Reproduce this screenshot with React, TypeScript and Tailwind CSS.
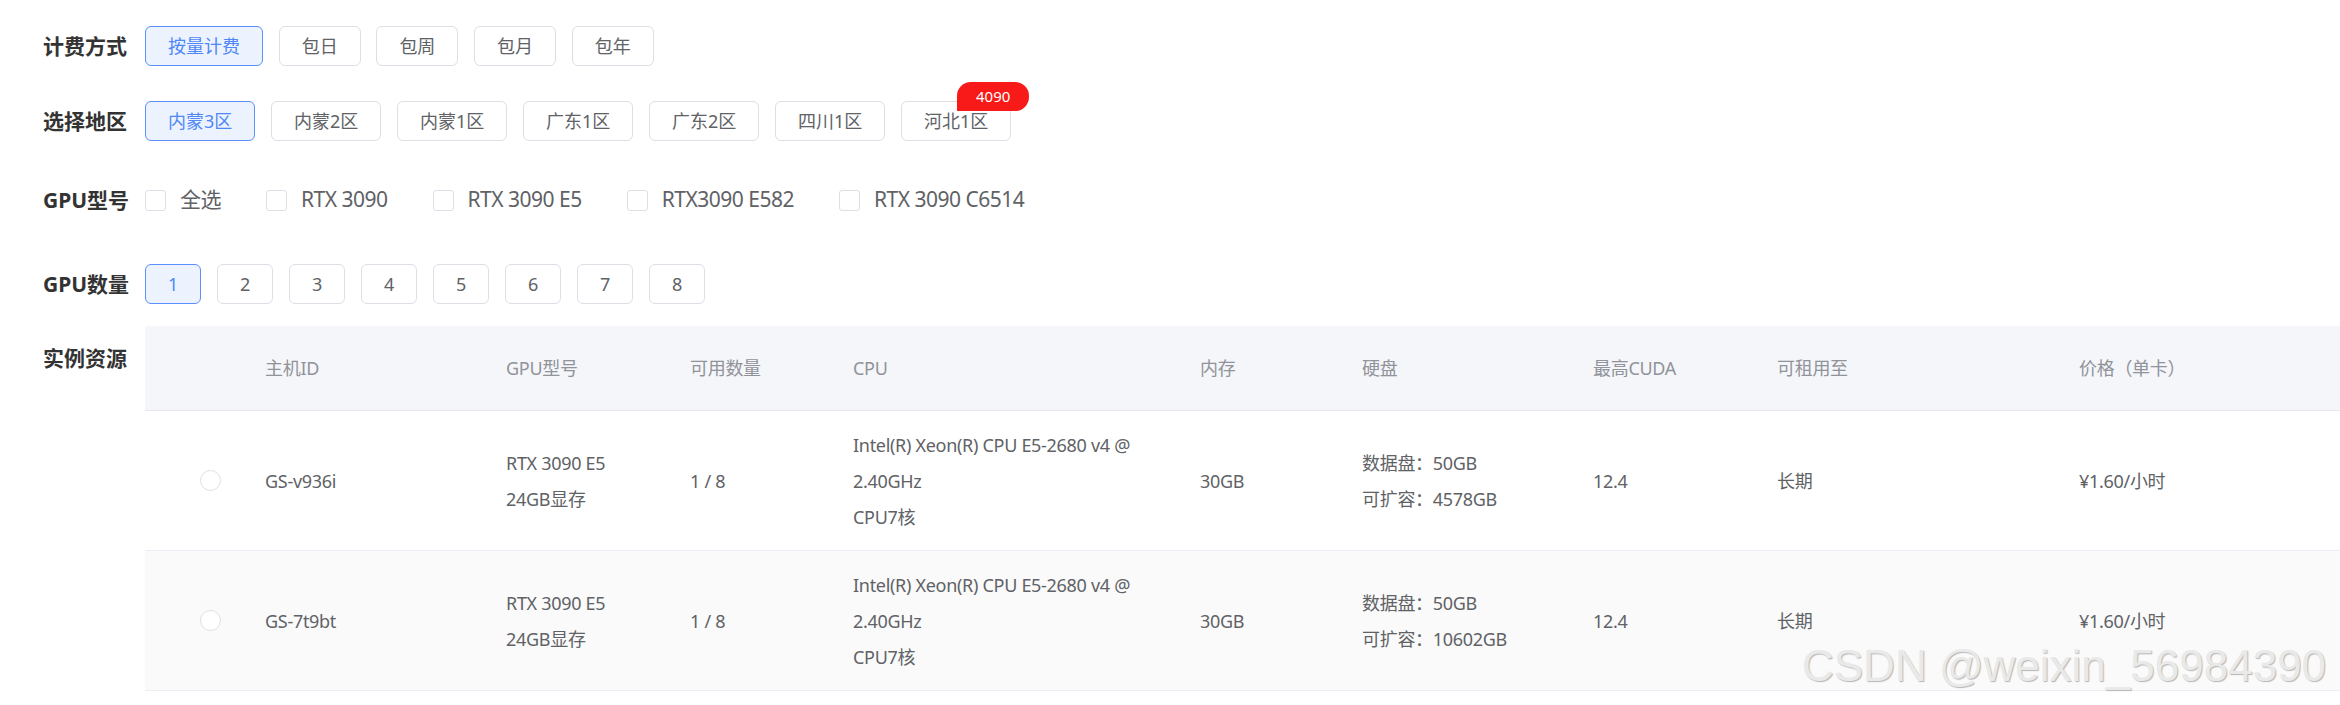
import React from "react";

const billing = ["按量计费", "包日", "包周", "包月", "包年"];
const regions = ["内蒙3区", "内蒙2区", "内蒙1区", "广东1区", "广东2区", "四川1区", "河北1区"];
const gpus = ["全选", "RTX 3090", "RTX 3090 E5", "RTX3090 E582", "RTX 3090 C6514"];
const counts = ["1", "2", "3", "4", "5", "6", "7", "8"];

const GRID =
  "grid grid-cols-[120px_241px_184px_163px_347px_162px_231px_184px_302px_1fr] items-center";

function Btn({ label, active }: { label: string; active?: boolean }) {
  return (
    <div
      className={
        active
          ? "h-[40px] px-[22px] flex items-center justify-center rounded-[6px] border border-[#5b8ff9] bg-[#ecf3ff] text-[#4f87f7] text-[18px]"
          : "h-[40px] px-[22px] flex items-center justify-center rounded-[6px] border border-[#dcdfe6] bg-white text-[#606266] text-[18px]"
      }
    >
      {label}
    </div>
  );
}

function Label({ children }: { children: React.ReactNode }) {
  return (
    <div className="w-[102px] shrink-0 text-[21px] font-bold text-[#333333] leading-[30px]">
      {children}
    </div>
  );
}

const rows = [
  { id: "GS-v936i", disk: "4578GB", bg: "bg-white" },
  { id: "GS-7t9bt", disk: "10602GB", bg: "bg-[#fafafa]" },
];

export default function App() {
  return (
    <div className="relative w-[2340px] h-[705px] overflow-hidden bg-white pl-[43px] font-['Noto_Sans','Noto_Sans_CJK_SC',sans-serif]">
      <div className="flex items-center mt-[26px] h-[40px]">
        <Label>计费方式</Label>
        <div className="flex gap-[15.7px]">
          {billing.map((b, i) => (
            <Btn key={b} label={b} active={i === 0} />
          ))}
        </div>
      </div>

      <div className="flex items-center mt-[35px] h-[40px]">
        <Label>选择地区</Label>
        <div className="flex gap-[15.7px]">
          {regions.map((r, i) => (
            <div key={r} className="relative">
              <Btn label={r} active={i === 0} />
              {i === regions.length - 1 && (
                <div className="absolute top-[-19px] right-[-18px] w-[72px] h-[29px] flex items-center justify-center bg-[#f81a18] text-white text-[15px] rounded-[14px] rounded-bl-none">
                  4090
                </div>
              )}
            </div>
          ))}
        </div>
      </div>

      <div className="flex items-center mt-[39px] h-[40px]">
        <Label>GPU型号</Label>
        <div className="flex items-center">
          {gpus.map((g) => (
            <div key={g} className="flex items-center mr-[45px]">
              <div className="w-[21px] h-[21px] rounded-[3px] border border-[#dcdfe6] bg-white" />
              <span className="ml-[14px] text-[21px] text-[#606266] tracking-[-0.5px]">{g}</span>
            </div>
          ))}
        </div>
      </div>

      <div className="flex items-center mt-[44px] h-[40px]">
        <Label>GPU数量</Label>
        <div className="flex gap-[15.7px]">
          {counts.map((c, i) => (
            <Btn key={c} label={c} active={i === 0} />
          ))}
        </div>
      </div>

      <div className="flex items-start mt-[22px]">
        <div className="pt-[17px]">
          <Label>实例资源</Label>
        </div>
        <div className="flex-1 text-[18px] tracking-[-0.3px]">
          <div className={GRID + " h-[85px] bg-[#f5f6fa] border-b border-[#e6e8ee] text-[#909399]"}>
            <div />
            <div>主机ID</div>
            <div>GPU型号</div>
            <div>可用数量</div>
            <div>CPU</div>
            <div>内存</div>
            <div>硬盘</div>
            <div>最高CUDA</div>
            <div>可租用至</div>
            <div>价格（单卡）</div>
          </div>
          {rows.map((r) => (
            <div
              key={r.id}
              className={GRID + " h-[140px] border-b border-[#ebeef5] text-[#606266] leading-[36px] " + r.bg}
            >
              <div className="pl-[55px]">
                <div className="w-[21px] h-[21px] rounded-full border border-[#dcdfe6] bg-white" />
              </div>
              <div>{r.id}</div>
              <div>
                <div>RTX 3090 E5</div>
                <div>24GB显存</div>
              </div>
              <div>1 / 8</div>
              <div>
                <div>Intel(R) Xeon(R) CPU E5-2680 v4 @</div>
                <div>2.40GHz</div>
                <div>CPU7核</div>
              </div>
              <div>30GB</div>
              <div>
                <div>数据盘：50GB</div>
                <div>可扩容：{r.disk}</div>
              </div>
              <div>12.4</div>
              <div>长期</div>
              <div>¥1.60/小时</div>
            </div>
          ))}
        </div>
      </div>

      <div className="absolute left-[1802px] top-[644px] text-[44px] leading-[44px] whitespace-nowrap font-['Liberation_Sans',Arial,sans-serif] text-[#e9e9e9] [text-shadow:1px_1px_1px_#b5b5b5]">
        CSDN @weixin_56984390
      </div>
    </div>
  );
}
